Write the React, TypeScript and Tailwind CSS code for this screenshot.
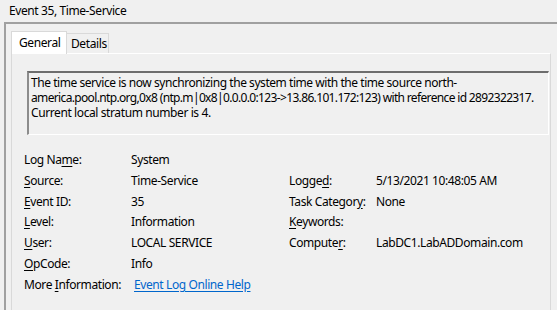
import React from "react";

const U = ({ children }: { children: React.ReactNode }) => (
  <span className="underline underline-offset-[2px]">{children}</span>
);

export default function App() {
  const left: [React.ReactNode, React.ReactNode][] = [
    [<>Log Na<U>m</U>e:</>, "System"],
    [<><U>S</U>ource:</>, "Time-Service"],
    [<><U>E</U>vent ID:</>, "35"],
    [<><U>L</U>evel:</>, "Information"],
    [<><U>U</U>ser:</>, "LOCAL SERVICE"],
    [<><U>O</U>pCode:</>, "Info"],
  ];
  const right: ([React.ReactNode, React.ReactNode] | null)[] = [
    null,
    [<>Logge<U>d</U>:</>, "5/13/2021 10:48:05 AM"],
    [<>Task Categor<U>y</U>:</>, "None"],
    [<><U>K</U>eywords:</>, ""],
    [<>Compute<U>r</U>:</>, "LabDC1.LabADDomain.com"],
    null,
  ];
  return (
    <div className="w-[557px] h-[310px] overflow-hidden bg-[#f0f0f0] text-black text-[12px] font-['Noto_Sans',sans-serif] tracking-[-0.4px]">
      <div className="h-[22px] pl-[9px] pt-[2px] leading-[18px]">Event 35, Time-Service</div>
      <div className="ml-[4px] h-[300px] border-t-2 border-l-2 border-[#a0a0a0] pl-[5px] pt-[6px]">
        <div className="flex items-end h-[23px]">
          <div className="h-[23px] w-[56px] bg-white border border-b-0 border-[#d9d9d9] pl-[7px] pt-[2px] leading-[18px] relative z-10 -mb-px">
            General
          </div>
          <div className="h-[20px] w-[42px] border border-l-0 border-b-0 border-[#d9d9d9] pl-[4px] leading-[19px]">
            Details
          </div>
        </div>
        <div className="mr-[6px] h-[300px] border border-[#d9d9d9] border-t-white bg-[#f0f0f0] pt-[17px]">
          <div className="ml-[15px] mr-px h-[64px] whitespace-nowrap overflow-hidden border-t-2 border-l-2 border-t-[#6d6d6d] border-l-[#8c8c8c] border-r border-b border-r-white border-b-white pl-[2px] pt-[2px] leading-[15px]">
            <div className="tracking-[-0.45px]">The time service is now synchronizing the system time with the time source north-</div>
            <div className="tracking-[-0.65px]">america.pool.ntp.org,0x8 (ntp.m|0x8|0.0.0.0:123-&gt;13.86.101.172:123) with reference id 2892322317.</div>
            <div>Current local stratum number is 4.</div>
          </div>
          <div className="mt-[15px] pl-[12px] grid grid-cols-[107px_158px_87px_1fr] auto-rows-[20.8px] leading-[20.8px] whitespace-nowrap">
            {left.map((l, i) => (
              <React.Fragment key={i}>
                <div>{l[0]}</div>
                <div>{l[1]}</div>
                <div>{right[i] ? right[i]![0] : null}</div>
                <div>{right[i] ? right[i]![1] : null}</div>
              </React.Fragment>
            ))}
            <div>
              More <U>I</U>nformation:
            </div>
            <div className="col-span-3 pl-[3px]">
              <span className="text-[#0066cc] underline underline-offset-[2px]">Event Log Online Help</span>
            </div>
          </div>
        </div>
      </div>
    </div>
  );
}
